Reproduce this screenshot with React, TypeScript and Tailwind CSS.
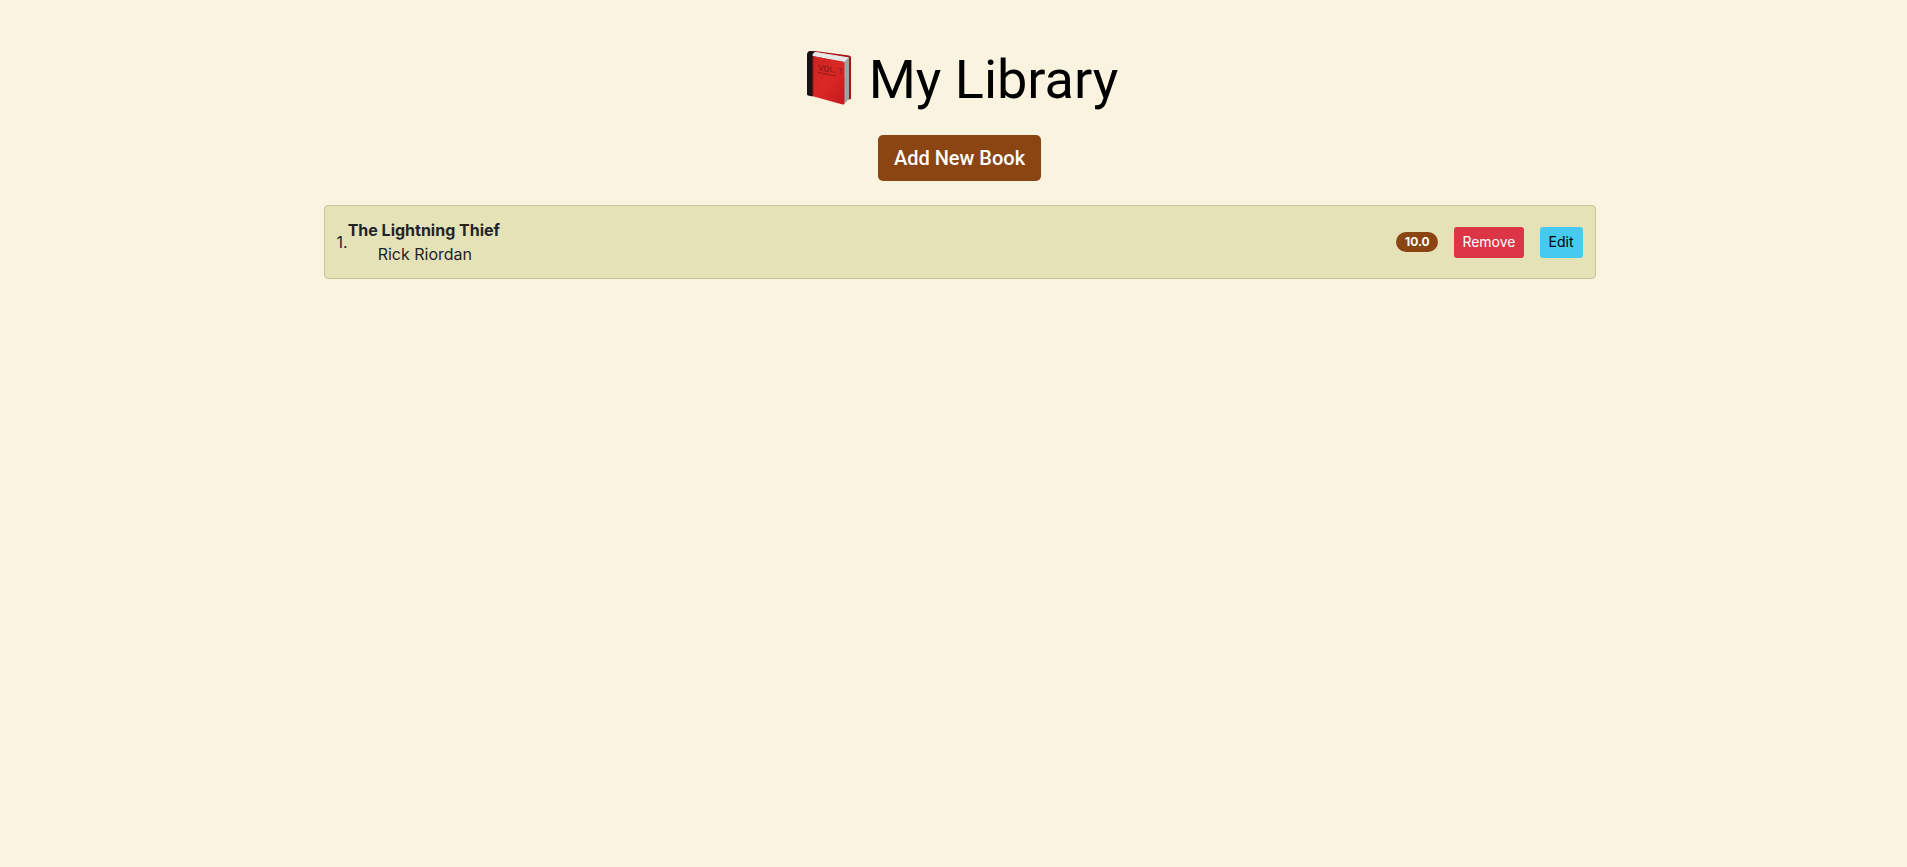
function BookIcon() {
  return (
    <svg viewBox="0 0 56 60" className="h-15 w-14 shrink-0" aria-hidden="true">
      <defs>
        <linearGradient id="cover" x1="0" y1="0" x2="1" y2="1">
          <stop offset="0" stopColor="#cc2422" />
          <stop offset="0.5" stopColor="#da2825" />
          <stop offset="1" stopColor="#c41a1c" />
        </linearGradient>
        <linearGradient id="pages" x1="0" y1="0" x2="1" y2="0">
          <stop offset="0" stopColor="#e6e8e9" />
          <stop offset="1" stopColor="#9a9fa2" />
        </linearGradient>
      </defs>
      <path d="M8 1.500 L14 1 L48 5.500 Q50 6 50 7.500 V49 L43 50.500 L12 12Z" fill="#ad1217" />
      <path d="M11 4 L14 2 L48 7.500 V48.500 L43.500 54 L40 12Z" fill="url(#pages)" />
      <path d="M10 4 L14 2 L48 7.500 L42.500 12.500 L12 6Z" fill="#e6e8e8" />
      <path d="M11 6 L42 11.500 Q43.500 12 43.500 13.500 V53 Q43.500 55 41.500 54.500 L11 46Z" fill="url(#cover)" />
      <path d="M6 5 Q6 1 9.500 1 L14 1.500 L11.500 4.500 V46.500 L7 45.500 Q6 45 6 44Z" fill="#151313" />
      <path d="M11.500 6 V46" stroke="#5d1011" strokeWidth="1.500" />
      <text x="17" y="19" fontSize="8" fill="#86191a" transform="skewY(8) translate(0 -1)" className="font-['Inter',sans-serif] font-medium">VOL. 1</text>
      <path d="M17 22.500 L35 26" stroke="#97191b" strokeWidth="1.200" strokeDasharray="2 0.500" />
    </svg>
  );
}

const books = [{ title: "The Lightning Thief", author: "Rick Riordan", rating: "10.0" }];

export default function App() {
  return (
    <main className="min-h-screen bg-[#faf3e0] pt-12 pl-3 font-['Inter',sans-serif] text-base text-[#212529]">
      <div className="mx-auto flex max-w-[1272px] flex-col items-center">
        <h1 className="flex items-center gap-3 font-['Roboto',sans-serif] text-[54px] leading-[63px] font-normal text-black">
          <BookIcon />
          My Library
        </h1>
        <button
          type="button"
          className="mt-6 h-[46px] cursor-pointer rounded-[5px] bg-[#8b4513] px-4 font-['Roboto',sans-serif] text-xl font-medium text-white"
        >
          Add New Book
        </button>
        <ol className="mt-6 w-full rounded border border-[#c9c49c] bg-[#e6e2b7]">
          {books.map((book, i) => (
            <li key={book.title} className="flex items-center p-3">
              <span>{i + 1}.</span>
              <div className="mr-auto leading-6">
                <h2 className="font-bold">{book.title}</h2>
                <p className="pl-[30px]">{book.author}</p>
              </div>
              <div className="flex items-center gap-4">
                <span className="h-5 min-w-[42px] rounded-full bg-[#8b4513] px-2 text-center text-xs leading-5 font-bold text-white">
                  {book.rating}
                </span>
                <button type="button" className="h-[31px] cursor-pointer rounded-[3px] bg-[#dc3545] px-2 text-sm text-white">
                  Remove
                </button>
                <button type="button" className="h-[31px] min-w-[43px] cursor-pointer rounded-[3px] bg-[#46caf0] px-2 text-sm text-black">
                  Edit
                </button>
              </div>
            </li>
          ))}
        </ol>
      </div>
    </main>
  );
}
